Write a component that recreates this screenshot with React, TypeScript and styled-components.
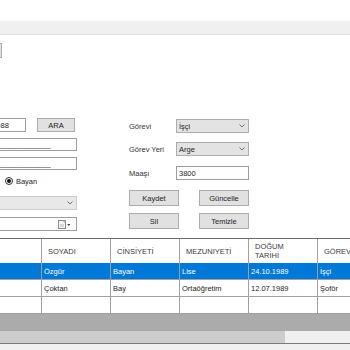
import React from "react";
import styled, { createGlobalStyle } from "styled-components";

const GlobalStyle = createGlobalStyle`
  html, body { margin: 0; padding: 0; background: #fff; }
  body {
    font-family: "Liberation Sans", Arial, sans-serif;
    font-size: 7.5px;
    color: #222;
  }
  * { box-sizing: border-box; }
`;

const Window = styled.div`
  width: 350px;
  height: 350px;
  overflow: hidden;
  display: flex;
  flex-direction: column;
  background: #fff;
`;

const TopSpace = styled.div`
  height: 21px;
  flex: none;
`;

const TabStrip = styled.div`
  height: 14px;
  flex: none;
  background: #f0f0f0;
  border-bottom: 1px solid #e2e2e2;
`;

const StubButton = styled.div`
  flex: none;
  margin-top: 8px;
  margin-left: -40px;
  width: 42px;
  height: 15px;
  border: 1px solid #adadad;
  background: #e1e1e1;
`;

const FormArea = styled.div`
  flex: none;
  margin-top: 60px;
  display: flex;
  align-items: flex-start;
`;

const LeftColumn = styled.div`
  margin-left: -40px;
  width: 117px;
  display: flex;
  flex-direction: column;
  flex: none;
`;

const Row = styled.div<{ $mt?: number; $h?: number }>`
  display: flex;
  align-items: center;
  gap: 11px;
  margin-top: ${(p) => p.$mt ?? 0}px;
  height: ${(p) => p.$h ?? 14}px;
`;

const TextBox = styled.div<{ $w?: number }>`
  width: ${(p) => (p.$w ? `${p.$w}px` : "100%")};
  height: 100%;
  border: 1px solid #9d9d9d;
  background: #fff;
  display: flex;
  align-items: center;
  padding-left: 2px;
  color: #1e1e1e;
  white-space: nowrap;
  overflow: hidden;
  flex: none;
`;

const Button = styled.div<{ $w: number; $h?: number }>`
  width: ${(p) => p.$w}px;
  height: ${(p) => p.$h ?? 14}px;
  border: 1px solid #adadad;
  background: #e1e1e1;
  display: flex;
  align-items: center;
  justify-content: center;
  color: #1e1e1e;
  flex: none;
`;

const RadioGroup = styled.div`
  display: flex;
  align-items: center;
  gap: 15px;
  padding-left: 6px;
`;

const RadioOption = styled.label`
  display: flex;
  align-items: center;
  gap: 3px;
  color: #1e1e1e;
`;

const RadioCircle = styled.span<{ $checked?: boolean }>`
  width: 8px;
  height: 8px;
  border-radius: 50%;
  border: 1px solid #333;
  background: #fff;
  display: flex;
  align-items: center;
  justify-content: center;
  &::after {
    content: "";
    width: 4px;
    height: 4px;
    border-radius: 50%;
    background: ${(p) => (p.$checked ? "#111" : "transparent")};
  }
`;

const Combo = styled.div<{ $disabled?: boolean }>`
  width: 100%;
  height: 100%;
  border: 1px solid ${(p) => (p.$disabled ? "#cccccc" : "#adadad")};
  background: ${(p) => (p.$disabled ? "#e8e8e8" : "#e3e3e3")};
  display: flex;
  align-items: center;
  justify-content: space-between;
  padding: 0 3px 0 2px;
  color: #1e1e1e;
`;

const DatePicker = styled.div`
  width: 100%;
  height: 100%;
  border: 1px solid #9d9d9d;
  background: #fff;
  display: flex;
  align-items: center;
  justify-content: flex-end;
  padding-right: 5px;
`;

const RightColumn = styled.div`
  margin-left: 52px;
  display: flex;
  flex-direction: column;
  flex: none;
`;

const FieldRow = styled.div<{ $mt?: number }>`
  display: grid;
  grid-template-columns: 47px 73px;
  align-items: center;
  height: 14px;
  margin-top: ${(p) => p.$mt ?? 0}px;
`;

const Label = styled.span`
  color: #333;
`;

const ButtonRow = styled.div<{ $mt?: number }>`
  display: flex;
  gap: 20px;
  margin-top: ${(p) => p.$mt ?? 0}px;
`;

const Grid = styled.div`
  flex: none;
  margin-top: 7px;
  border-top: 1px solid #6b6b6b;
  border-bottom: 1px solid #7a7a7a;
  display: flex;
  flex-direction: column;
`;

const GridRow = styled.div<{ $header?: boolean; $selected?: boolean }>`
  display: grid;
  grid-template-columns: 42px repeat(5, 69px);
  height: ${(p) => (p.$header ? 24 : 17)}px;
  background: ${(p) => (p.$selected ? "#0078d7" : "#fff")};
  color: ${(p) => (p.$selected ? "#fff" : p.$header ? "#3a3a3a" : "#1e1e1e")};
  border-bottom: ${(p) => (p.$header ? "none" : "1px solid #a0a0a0")};
`;

const Cell = styled.div<{ $header?: boolean }>`
  border-right: 1px solid #a0a0a0;
  display: flex;
  align-items: center;
  padding-left: ${(p) => (p.$header ? 6 : 2)}px;
  line-height: 9px;
  white-space: pre;
  overflow: hidden;
`;

const GrayArea = styled.div`
  height: 17px;
  background: #ababab;
`;

const ScrollTrack = styled.div`
  height: 12px;
  background: #f0f0f0;
  display: flex;
`;

const ScrollThumb = styled.div`
  width: 285px;
  height: 100%;
  background: #cdcdcd;
`;

const Footer = styled.div`
  flex: 1;
  background: #f0f0f0;
`;

const Chevron = () => (
  <svg width="6" height="4" viewBox="0 0 6 4">
    <polyline points="0.5,0.5 3,3 5.5,0.5" fill="none" stroke="#666" strokeWidth="0.9" />
  </svg>
);

const CalendarIcon = () => (
  <svg width="13" height="9" viewBox="0 0 13 9">
    <rect x="0.5" y="0.5" width="7" height="8" fill="#f4f4f4" stroke="#8a8a8a" strokeWidth="1" />
    <path d="M5 0.5 L7.5 3" stroke="#8a8a8a" strokeWidth="0.8" fill="none" />
    <rect x="2" y="4" width="4" height="3" fill="#d8d8d8" />
    <polygon points="9,4 12.5,4 10.75,6" fill="#2a4d8f" />
  </svg>
);

const headers = ["", "SOYADI", "CİNSİYETİ", "MEZUNIYETİ", "DOĞUM\nTARİHİ", "GÖREVİ"];
const rows = [
  { selected: true, cells: ["", "Özgür", "Bayan", "Lise", "24.10.1989", "İşçi"] },
  { selected: false, cells: ["", "Çoktan", "Bay", "Ortaöğretim", "12.07.1989", "Şoför"] },
  { selected: false, cells: ["", "", "", "", "", ""] },
];

export default function App() {
  return (
    <>
      <GlobalStyle />
      <Window>
        <TopSpace />
        <TabStrip />
        <StubButton />
        <FormArea>
          <LeftColumn>
            <Row>
              <TextBox $w={66}>12345678988</TextBox>
              <Button $w={38}>ARA</Button>
            </Row>
            <Row $mt={6} $h={13}>
              <TextBox>_____________________</TextBox>
            </Row>
            <Row $mt={6} $h={13}>
              <TextBox>_____________________</TextBox>
            </Row>
            <Row $mt={4}>
              <RadioGroup>
                <RadioOption>
                  <RadioCircle />
                  Bay
                </RadioOption>
                <RadioOption>
                  <RadioCircle $checked />
                  Bayan
                </RadioOption>
              </RadioGroup>
            </Row>
            <Row $mt={8}>
              <Combo $disabled>
                <span />
                <Chevron />
              </Combo>
            </Row>
            <Row $mt={7}>
              <DatePicker>
                <CalendarIcon />
              </DatePicker>
            </Row>
          </LeftColumn>
          <RightColumn>
            <FieldRow $mt={1}>
              <Label>Görevi</Label>
              <Combo>
                <span>İşçi</span>
                <Chevron />
              </Combo>
            </FieldRow>
            <FieldRow $mt={9}>
              <Label>Görev Yeri</Label>
              <Combo>
                <span>Arge</span>
                <Chevron />
              </Combo>
            </FieldRow>
            <FieldRow $mt={10}>
              <Label>Maaşı</Label>
              <TextBox>3800</TextBox>
            </FieldRow>
            <ButtonRow $mt={10}>
              <Button $w={50} $h={16}>Kaydet</Button>
              <Button $w={50} $h={16}>Güncelle</Button>
            </ButtonRow>
            <ButtonRow $mt={7}>
              <Button $w={50} $h={16}>Sil</Button>
              <Button $w={50} $h={16}>Temizle</Button>
            </ButtonRow>
          </RightColumn>
        </FormArea>
        <Grid>
          <GridRow $header>
            {headers.map((h, i) => (
              <Cell key={i} $header>
                {h}
              </Cell>
            ))}
          </GridRow>
          {rows.map((r, i) => (
            <GridRow key={i} $selected={r.selected}>
              {r.cells.map((c, j) => (
                <Cell key={j}>{c}</Cell>
              ))}
            </GridRow>
          ))}
          <GrayArea />
          <ScrollTrack>
            <ScrollThumb />
          </ScrollTrack>
        </Grid>
        <Footer />
      </Window>
    </>
  );
}
